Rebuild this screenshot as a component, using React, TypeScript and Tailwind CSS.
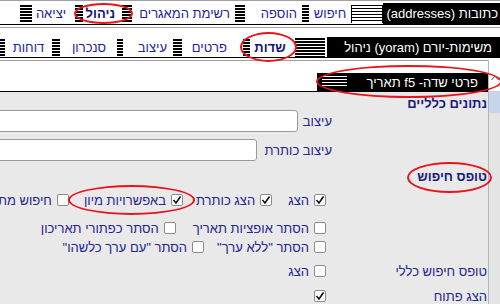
import React from "react";

const sepCls =
  "shrink-0 h-[17px] bg-[repeating-linear-gradient(to_bottom,#000_0px,#000_2px,#fff_2px,#fff_3px)]";

function Sep({ w, mr }: { w: string; mr: string }) {
  return <div className={`${sepCls} ${w} ${mr}`} />;
}

function Link({
  children,
  w,
  mr,
  bold,
}: {
  children: React.ReactNode;
  w: string;
  mr: string;
  bold?: boolean;
}) {
  return (
    <div
      className={`shrink-0 whitespace-nowrap text-center text-[13px] ${w} ${mr} ${
        bold ? "font-bold text-[#14147a]" : "text-[#2323a0]"
      }`}
    >
      {children}
    </div>
  );
}

function Cb({ checked }: { checked?: boolean }) {
  return (
    <span className="shrink-0 inline-flex items-center justify-center w-[12px] h-[12px] bg-white border border-[#8c8c8c] rounded-[2px]">
      {checked && (
        <svg width="10" height="10" viewBox="0 0 10 10">
          <path d="M1.5 5 L4 8 L8.5 1.5" fill="none" stroke="#111" strokeWidth="1.6" />
        </svg>
      )}
    </span>
  );
}

function CbItem({
  checked,
  label,
  mr,
}: {
  checked?: boolean;
  label?: string;
  mr: string;
}) {
  return (
    <div className={`shrink-0 flex items-center whitespace-nowrap ${mr}`}>
      <Cb checked={checked} />
      {label && <span className="mr-[5px] text-[13px] text-[#25258f]">{label}</span>}
    </div>
  );
}

function Row({
  h,
  right,
  children,
  align = "items-center",
}: {
  h: string;
  right?: React.ReactNode;
  children?: React.ReactNode;
  align?: string;
}) {
  return (
    <div className={`flex shrink-0 ${h} ${align}`}>
      <div className="w-[155px] shrink-0 pr-[1px] whitespace-nowrap">{right}</div>
      <div className="flex-1 min-w-0 flex items-center whitespace-nowrap">{children}</div>
    </div>
  );
}

export default function App() {
  return (
    <div
      dir="rtl"
      className="relative w-[500px] h-[304px] overflow-hidden bg-white font-['Liberation_Sans',Arial,sans-serif] leading-none"
    >
      {/* Row 1 */}
      <div className="h-[25px] border-t border-[#a0a0a0] border-b border-b-black pt-[2px] flex items-center">
        <div className="shrink-0 w-[117px] h-[21px] bg-black text-white text-[13px] flex items-center pr-[2px] whitespace-nowrap">
          כתובות (addresses)
        </div>
        <div className="shrink-0 w-[32px] h-[18px] border-x border-black bg-[repeating-linear-gradient(to_bottom,#000_0px,#000_1px,#fff_1px,#fff_3px)]" />
        <Link w="w-[34px]" mr="mr-[4px]">חיפוש</Link>
        <Sep w="w-[7px]" mr="mr-[4px]" />
        <Link w="w-[34px]" mr="mr-[5px]">הוספה</Link>
        <Sep w="w-[10px]" mr="mr-[18px]" />
        <Link w="w-[90px]" mr="mr-[5px]">רשימת המאגרים</Link>
        <Sep w="w-[10px]" mr="mr-[8px]" />
        <Link w="w-[27px]" mr="mr-[7px]" bold>
          ניהול
        </Link>
        <Sep w="w-[8px]" mr="mr-[5px]" />
        <Link w="w-[32px]" mr="mr-[8px]">יציאה</Link>
        <Sep w="w-[12px]" mr="mr-[3px]" />
      </div>

      {/* Row 2 */}
      <div className="mt-[2px] h-[31px] border-t border-[#a0a0a0] border-b border-b-black pt-[9px] flex items-center">
        <div className="shrink-0 w-[173px] h-[20px] bg-black text-white text-[13px] flex items-center pr-[8px] whitespace-nowrap">
          משימות-יורם (yoram) ניהול
        </div>
        <div className="shrink-0 mr-[2px] w-[30px] h-[19px] bg-[repeating-linear-gradient(to_bottom,#000_0px,#000_2px,#fff_2px,#fff_3px)]" />
        <Link w="w-[34px]" mr="mr-[8px]" bold>
          שדות
        </Link>
        <Sep w="w-[7px]" mr="mr-[3px]" />
        <Link w="w-[35px]" mr="mr-[16px]">פרטים</Link>
        <Sep w="w-[9px]" mr="mr-[10px]" />
        <Link w="w-[29px]" mr="mr-[6px]">עיצוב</Link>
        <Sep w="w-[6px]" mr="mr-[15px]" />
        <Link w="w-[38px]" mr="mr-[9px]">סנכרון</Link>
        <Sep w="w-[8px]" mr="mr-[10px]" />
        <Link w="w-[33px]" mr="mr-[7px]">דוחות</Link>
        <Sep w="w-[5px]" mr="mr-[7px]" />
      </div>

      {/* Main area */}
      <div className="mt-[2px] flex h-[244px]">
        {/* scrollbar */}
        <div className="shrink-0 w-[12px] flex flex-col border-l border-[#b5b5b5] bg-[#e6e6e6]">
          <div className="h-[31px] bg-white flex items-start justify-center pt-[15px]">
            <svg width="8" height="6" viewBox="0 0 8 6">
              <path d="M0.5 5 L4 1.2 L7.5 5" fill="none" stroke="#444" strokeWidth="1" />
            </svg>
          </div>
          <div className="h-[22px] bg-[#c7d5ea]" />
          <div className="flex-1 bg-[#e4e4e4]" />
        </div>

        {/* content */}
        <div className="flex-1 min-w-0 flex flex-col border-t border-[#a0a0a0]">
          <div className="h-[30px] shrink-0 flex items-end">
            <div className="shrink-0 w-[171px] h-[18px] bg-black text-white text-[13px] flex items-center">
              <span className="pr-[10px] whitespace-nowrap">פרטי שדה- f5 תאריך</span>
              <div className="mr-auto ml-[5px] w-[25px] h-[12px] bg-[repeating-linear-gradient(to_bottom,#fff_0px,#fff_1px,#000_1px,#000_3px)]" />
            </div>
          </div>

          <div className="flex-1 bg-[#e9e9e9] border-t border-black pt-[3px] flex flex-col">
            <Row
              h="h-[15px]"
              right={<span className="text-[13px] font-bold text-[#1a1a80]">נתונים כלליים</span>}
            />
            <Row h="h-[29px]" align="items-start">
              <div className="flex items-center h-[22px] shrink-0">
                <span className="mr-[1px] text-[13px] text-[#25258f]">עיצוב</span>
                <input
                  readOnly
                  className="mr-[5px] shrink-0 w-[330px] h-[22px] bg-white border border-[#9a9a9a] rounded-[3px] outline-none"
                />
              </div>
            </Row>
            <Row h="h-[29px]" align="items-start">
              <div className="flex items-center h-[22px] shrink-0">
                <span className="mr-[1px] text-[13px] text-[#25258f]">עיצוב כותרת</span>
                <input
                  readOnly
                  className="mr-[7px] shrink-0 w-[300px] h-[22px] bg-white border border-[#9a9a9a] rounded-[3px] outline-none"
                />
              </div>
            </Row>
            <Row
              h="h-[15px]"
              right={<span className="text-[13px] font-bold text-[#1a1a80]">טופס חיפוש</span>}
            />
            <Row h="h-[34px]">
              <CbItem checked label="הצג" mr="mr-[7px]" />
              <CbItem checked label="הצג כותרת" mr="mr-[16px]" />
              <CbItem checked label="באפשרויות מיון" mr="mr-[13px]" />
              <CbItem label="חיפוש מתקדם" mr="mr-[15px]" />
            </Row>
            <Row h="h-[22px]">
              <CbItem label="הסתר אופציות תאריך" mr="mr-[7px]" />
              <CbItem label="הסתר כפתורי תאריכון" mr="mr-[17px]" />
            </Row>
            <Row h="h-[16px]">
              <CbItem label={'הסתר "ללא ערך"'} mr="mr-[7px]" />
              <CbItem label={'הסתר "עם ערך כלשהו"'} mr="mr-[13px]" />
            </Row>
            <Row
              h="h-[32px]"
              right={<span className="text-[13px] text-[#25258f]">טופס חיפוש כללי</span>}
            >
              <CbItem label="הצג" mr="mr-[7px]" />
            </Row>
            <Row
              h="h-[18px]"
              right={<span className="text-[13px] text-[#25258f]">הצג פתוח</span>}
            >
              <CbItem checked mr="mr-[7px]" />
            </Row>
          </div>
        </div>
      </div>

      {/* red annotation ellipses */}
      <div className="absolute left-[74px] top-[3px] w-[59px] h-[21px] rounded-[50%] border-2 border-[#e8141c]" />
      <div className="absolute left-[240px] top-[32px] w-[57px] h-[30px] rounded-[50%] border-2 border-[#e8141c]" />
      <div className="absolute left-[316px] top-[65px] w-[186px] h-[33px] rounded-[50%] border-2 border-[#e8141c]" />
      <div className="absolute left-[68px] top-[185px] w-[127px] h-[30px] rounded-[50%] border-2 border-[#e8141c]" />
      <div className="absolute left-[407px] top-[162px] w-[85px] h-[31px] rounded-[50%] border-2 border-[#e8141c]" />
    </div>
  );
}
